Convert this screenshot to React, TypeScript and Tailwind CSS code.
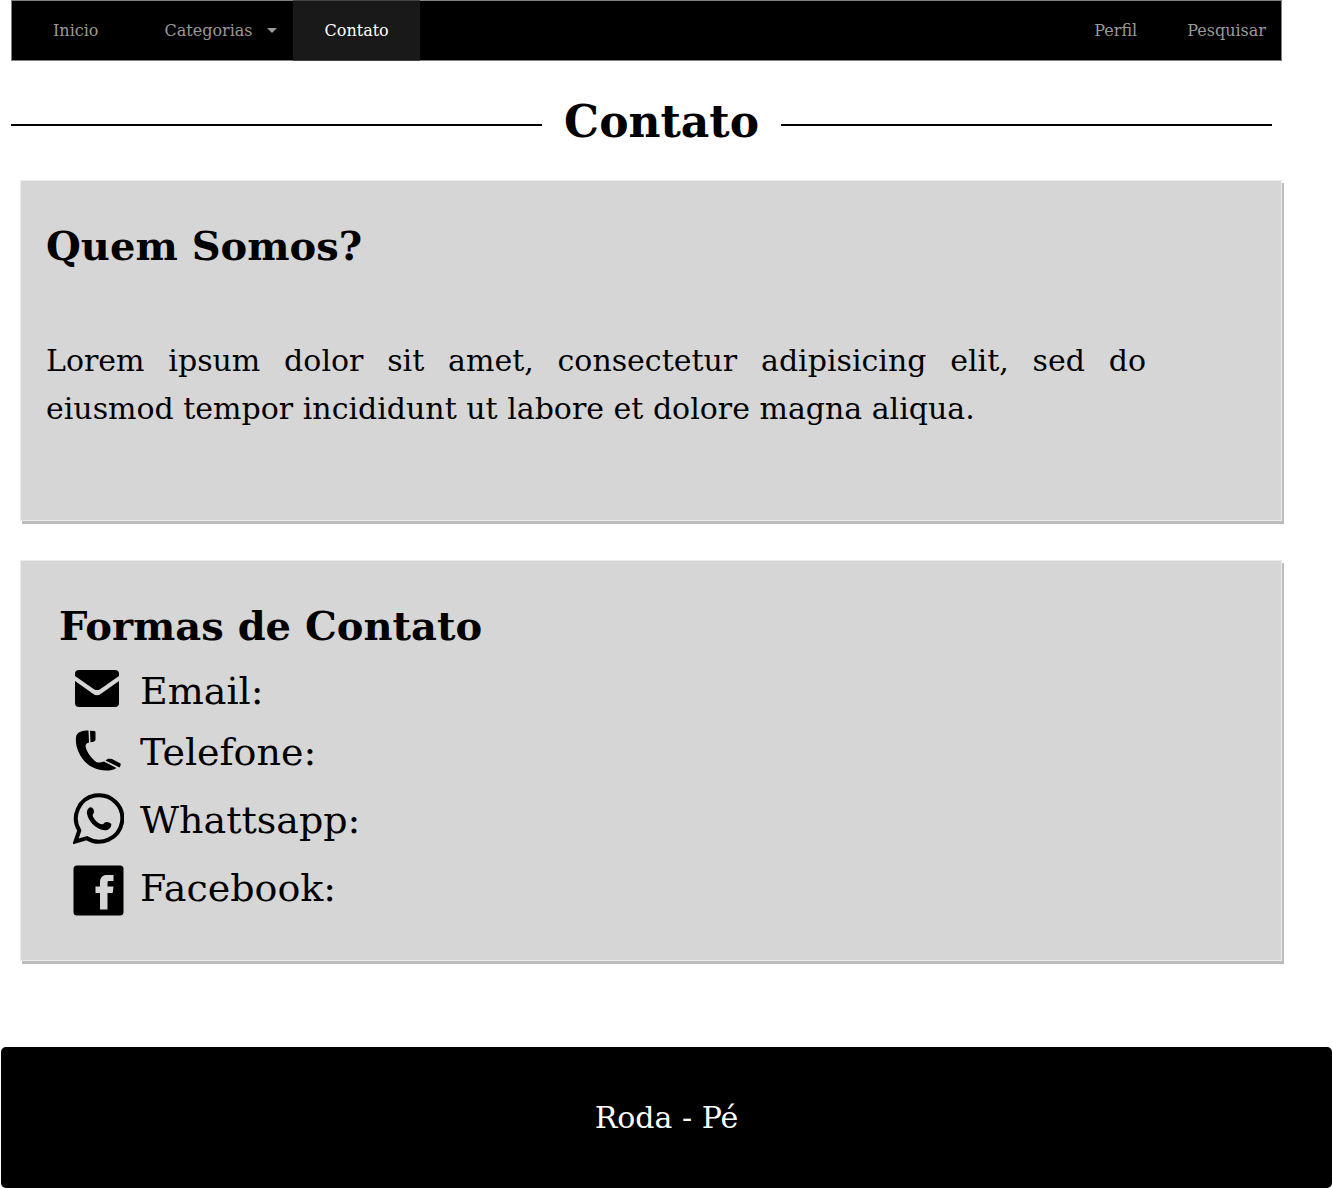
import React from "react";

const card =
  "ml-5 mr-[50px] border border-[#ececec] bg-[#d6d6d6] shadow-[2px_3px_0_0_#bdbdbd]";

function EmailIcon() {
  return (
    <svg viewBox="0 0 44 37" className="mb-1.5 ml-4 h-[37px] w-11" aria-hidden="true">
      <path d="M4 0H40Q44 0 44 4V6L25 19.200Q22 21 19 19.200L0 6V4Q0 0 4 0Z" />
      <path d="M0 11L18 23.700Q22 27 26 23.700L44 11V33Q44 37 40 37H4Q0 37 0 33Z" />
    </svg>
  );
}

function PhoneIcon() {
  return (
    <svg viewBox="0 0 46 41" className="mb-1 ml-4 h-[41px] w-[46px]" aria-hidden="true">
      <path d="M13.500 0.500C7 0.500 1.500 2 1 7.500C-0.500 19 9 40.500 31 40.500C35 40.500 39 40 41.500 38L29 31.500C25 33 22 33 20 31C16 27.500 11.500 21.500 10.700 17C10.300 14.500 11.500 13 14 12.500Z" />
      <path d="M15 0.800L19.500 1Q20.500 1.200 20.500 2.500V10Q20 11.800 15.500 12.200Z" />
      <path d="M30.500 30.500L33 28.800Q35 28.500 37 29L45.500 33.500Q46 35.500 44.500 37.500Z" />
    </svg>
  );
}

function WhatsappIcon() {
  return (
    <svg viewBox="0 0 51 51" className="mb-1 ml-[14px] size-[51px]" aria-hidden="true">
      <path
        d="M2.500 48.500L6.300 37.500A23.200 23.200 0 1 1 14 45.200Z"
        fill="none"
        stroke="black"
        strokeWidth="4"
      />
      <path d="M18 14.200C15.500 14 13.500 17.500 14 20.500C15.500 29 23 36.500 32 37.300C35.500 37.500 38.300 34.500 38.300 31.500C38.300 30 35.500 29 33.500 29C31.500 29 31 31.200 29 31.300C25 30.500 21 26.500 19.700 22.700C19.700 21 21 20.500 21 18.500C21 16.500 19.500 14.200 18 14.200Z" />
    </svg>
  );
}

function FacebookIcon() {
  return (
    <svg viewBox="0 0 51 51" className="mt-1 ml-[14px] size-[51px]" aria-hidden="true">
      <rect x="0.500" y="0.500" width="50" height="50" rx="3.500" />
      <path
        d="M27 44.500V28H22.500V21.500H27V17.500C27 12.500 29.500 10 34 10H40.500V16H36.500C35 16 34.500 16.500 34.500 18V21.500H40.500L39.700 28H34.500V44.500Z"
        fill="#d6d6d6"
      />
    </svg>
  );
}

const contacts = [
  { label: "Email:", icon: <EmailIcon />, size: "h-[60px]" },
  { label: "Telefone:", icon: <PhoneIcon />, size: "h-[62px]" },
  { label: "Whattsapp:", icon: <WhatsappIcon />, size: "h-[74px]" },
  { label: "Facebook:", icon: <FacebookIcon />, size: "h-[62px]" },
];

export default function App() {
  return (
    <div className="font-['DejaVu_Serif',serif] text-black">
      <nav className="mr-[50px] ml-[11px] flex h-[61px] justify-between bg-black text-base leading-[62px] text-[#999] shadow-[inset_0_0_0_1px_#808080]">
        <div className="flex">
          <a href="#inicio" className="mr-[34px] ml-[10px] px-8">
            Inicio
          </a>
          <button type="button" className="flex items-center gap-[14px] pr-4">
            Categorias
            <svg viewBox="0 0 10 5" className="h-[5px] w-[10px] fill-[#999]" aria-hidden="true">
              <path d="M0 0H10L5 5Z" />
            </svg>
          </button>
          <a
            href="#contato"
            aria-current="page"
            className="border-y border-[#444] bg-[#191919] pr-[31px] pl-8 leading-[60px] text-white"
          >
            Contato
          </a>
        </div>
        <div className="flex gap-[50px] pr-4">
          <a href="#perfil">Perfil</a>
          <a href="#pesquisar">Pesquisar</a>
        </div>
      </nav>

      <main>
        <div className="mt-[35px] mr-[60px] ml-[11px] flex items-center">
          <div className="mt-1.5 h-0.5 flex-[53] bg-black" />
          <h1 className="mx-[22px] text-[44px] leading-[52px] font-bold">Contato</h1>
          <div className="mt-1.5 h-0.5 flex-[49] bg-black" />
        </div>

        <section className={`${card} mt-8 pt-10 pr-[135px] pb-[87px] pl-[25px]`}>
          <h2 className="text-[40px] leading-[50px] font-bold">Quem Somos?</h2>
          <p className="mt-[66px] text-justify text-[30px] leading-[48px]">
            Lorem ipsum dolor sit amet, consectetur adipisicing elit, sed do eiusmod tempor
            incididunt ut labore et dolore magna aliqua.
          </p>
        </section>

        <section className={`${card} mt-[39px] pt-10 pb-[41px] pl-[38px]`}>
          <h2 className="text-[40px] leading-[50px] font-bold">Formas de Contato</h2>
          <ul className="mt-2.5">
            {contacts.map(({ label, icon, size }) => (
              <li key={label} className={`flex items-center ${size}`}>
                <span className="w-[81px] shrink-0">{icon}</span>
                <span className="text-[38px] leading-[48px]">{label}</span>
              </li>
            ))}
          </ul>
        </section>
      </main>

      <footer className="mt-[86px] mb-px ml-px rounded-[5px] bg-black pt-[47px] pb-[46px] text-center text-[30px] leading-[48px] text-white">
        Roda - Pé
      </footer>
    </div>
  );
}
